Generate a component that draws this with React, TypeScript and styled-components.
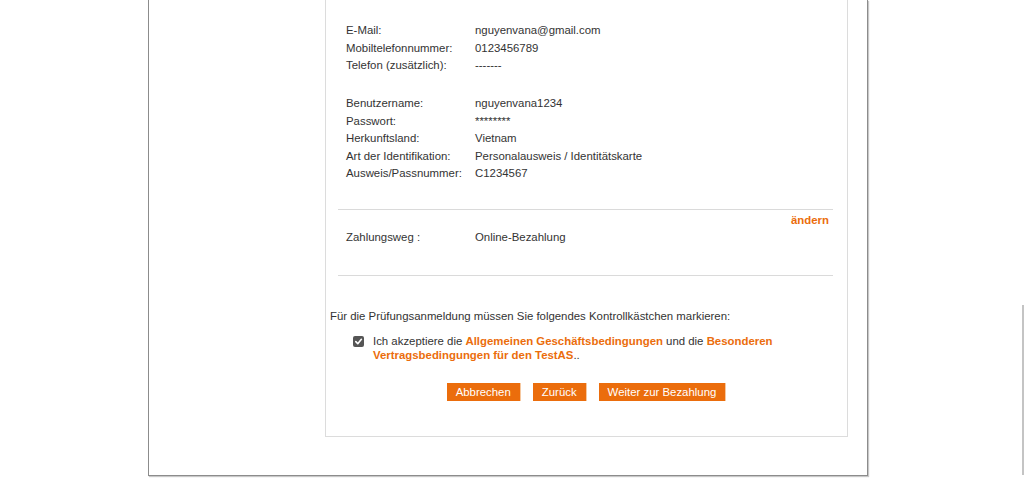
import React from "react";
import styled, { createGlobalStyle } from "styled-components";

const GlobalStyle = createGlobalStyle`
  html, body { margin: 0; padding: 0; background: #fff; }
  body {
    font-family: "Liberation Sans", Arial, sans-serif;
    color: #333;
    overflow: hidden;
  }
`;

const ORANGE = "#eb6d0c";

const Page = styled.div`
  position: relative;
  width: 1024px;
  height: 478px;
  overflow: hidden;
  background: #fff;
`;

const Frame = styled.div`
  margin-left: 148px;
  width: 718px;
  height: 475px;
  box-sizing: content-box;
  border: 1px solid #8c8c8c;
  border-top: none;
  box-shadow: 1px 1px 1px #c8c8c8;
  display: grid;
  grid-template-columns: 176px 523px;
  align-items: start;
`;

const Sidebar = styled.div``;

const Panel = styled.div`
  box-sizing: border-box;
  height: 437px;
  border: 1px solid #dcdcdc;
  border-top: none;
  display: flex;
  flex-direction: column;
  font-size: 11.4px;
`;

const Section = styled.div<{ $pl: number; $pr: number }>`
  padding: 0 ${(p) => p.$pr}px 0 ${(p) => p.$pl}px;
`;

const Group = styled.div<{ $mt: number }>`
  margin-top: ${(p) => p.$mt}px;
  padding-left: 8px;
`;

const Row = styled.div`
  display: grid;
  grid-template-columns: 129px 1fr;
  line-height: 17.5px;
  height: 17.5px;
  white-space: nowrap;
`;

const Divider = styled.hr<{ $mt: number }>`
  margin: ${(p) => p.$mt}px 0 0;
  border: none;
  border-top: 1px solid #dadada;
  height: 0;
`;

const EditLink = styled.a`
  display: block;
  margin-top: 2px;
  text-align: right;
  padding-right: 4px;
  line-height: 17.5px;
  color: ${ORANGE};
  font-weight: bold;
  text-decoration: none;
`;

const Note = styled.p`
  margin: 32px 0 0;
  line-height: 17.5px;
`;

const AcceptRow = styled.label`
  display: flex;
  align-items: flex-start;
  gap: 9px;
  margin-top: 9px;
  padding-left: 23px;
  line-height: 14px;
`;

const Box = styled.span`
  flex: none;
  width: 11px;
  height: 11px;
  margin-top: 2px;
  border-radius: 2px;
  background: #555;
  display: flex;
  align-items: center;
  justify-content: center;
`;

const AcceptText = styled.span`
  max-width: 460px;
`;

const TermsLink = styled.a`
  color: ${ORANGE};
  font-weight: bold;
  text-decoration: none;
`;

const Buttons = styled.div`
  display: flex;
  justify-content: center;
  gap: 12px;
  margin-top: 21px;
  padding-left: 10px;
`;

const Button = styled.button`
  height: 18px;
  padding: 0 9px;
  border: none;
  border-right: 1px solid #f6c8a0;
  background: ${ORANGE};
  color: #fff;
  font-family: "Liberation Sans", Arial, sans-serif;
  font-size: 11.4px;
  line-height: 18px;
  cursor: pointer;
`;

const ScrollThumb = styled.div`
  position: absolute;
  right: 0;
  top: 305px;
  width: 2px;
  height: 170px;
  background: #c4c4c4;
`;

const contact = [
  ["E-Mail:", "nguyenvana@gmail.com"],
  ["Mobiltelefonnummer:", "0123456789"],
  ["Telefon (zusätzlich):", "-------"],
];

const account = [
  ["Benutzername:", "nguyenvana1234"],
  ["Passwort:", "********"],
  ["Herkunftsland:", "Vietnam"],
  ["Art der Identifikation:", "Personalausweis / Identitätskarte"],
  ["Ausweis/Passnummer:", "C1234567"],
];

export default function App() {
  return (
    <>
      <GlobalStyle />
      <Page>
        <Frame>
          <Sidebar />
          <Panel>
            <Section $pl={12} $pr={14}>
              <Group $mt={22}>
                {contact.map(([k, v]) => (
                  <Row key={k}>
                    <span>{k}</span>
                    <span>{v}</span>
                  </Row>
                ))}
              </Group>
              <Group $mt={20.5}>
                {account.map(([k, v]) => (
                  <Row key={k}>
                    <span>{k}</span>
                    <span>{v}</span>
                  </Row>
                ))}
              </Group>
              <Divider $mt={26} />
              <EditLink href="#">ändern</EditLink>
              <Group $mt={0}>
                <Row>
                  <span>Zahlungsweg :</span>
                  <span>Online-Bezahlung</span>
                </Row>
              </Group>
              <Divider $mt={28} />
            </Section>
            <Section $pl={4} $pr={14}>
              <Note>Für die Prüfungsanmeldung müssen Sie folgendes Kontrollkästchen markieren:</Note>
              <AcceptRow>
                <Box>
                  <svg width="9" height="9" viewBox="0 0 10 10">
                    <path d="M2 5.2 L4.2 7.4 L8.2 2.6" fill="none" stroke="#fff" strokeWidth="1.8" strokeLinecap="round" strokeLinejoin="round" />
                  </svg>
                </Box>
                <AcceptText>
                  Ich akzeptiere die <TermsLink href="#">Allgemeinen Geschäftsbedingungen</TermsLink> und die{" "}
                  <TermsLink href="#">Besonderen Vertragsbedingungen für den TestAS</TermsLink>..
                </AcceptText>
              </AcceptRow>
              <Buttons>
                <Button>Abbrechen</Button>
                <Button>Zurück</Button>
                <Button>Weiter zur Bezahlung</Button>
              </Buttons>
            </Section>
          </Panel>
        </Frame>
        <ScrollThumb />
      </Page>
    </>
  );
}
